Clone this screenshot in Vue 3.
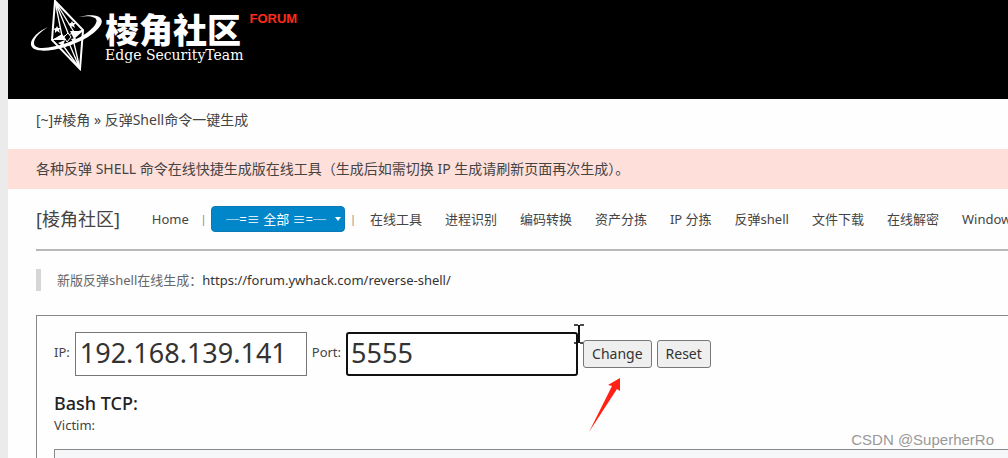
<script setup>
import { ref } from 'vue'

const ip = ref('192.168.139.141')
const port = ref('5555')
const category = ref('all')
const victim = ref('')

const links = ['在线工具', '进程识别', '编码转换', '资产分拣', 'IP 分拣', '反弹shell', '文件下载', '在线解密', 'Windows']

function reset() {
  ip.value = ''
  port.value = ''
}
</script>

<template>
  <div class="page">
    <header class="header">
      <svg class="logo" viewBox="0 0 74 74" aria-hidden="true">
        <g fill="none" stroke="#fff">
          <path d="M24 1 L52 30 L49 69 L21 40 Z" stroke-width="2" />
          <path d="M24 1 L31 36 M24 1 L43 32 M24 1 L37 33 M31 44 L49 69 M38 43 L49 69 M42 39 L49 69" stroke-width="1.3" />
          <path d="M21 40 L52 30" stroke-width="1" />
        </g>
        <path d="M21 40 L31 34 L35 40 Z M39 31 L52 31 L43 39 Z M27 43 L34 40 L32 46 Z M40 39 L45 38 L43 43 Z" fill="#fff" />
        <path d="M33 37 L37 33 L40 37 L36 42 Z" fill="#000" stroke="#fff" />
        <path d="M26 26 l1 2 3 0 -2 2 1 3 -3 -2 -2 2 0 -3 -2 -1 3 -1 Z M41 21 l1 2 3 0 -2 2 1 3 -3 -2 -2 2 0 -3 -2 -1 3 -1 Z" fill="#fff" />
        <path d="M17 27 C4 33 -3 42 1 47 C7 55 37 49 57 37 C71 28 75 19 66 16 C62 15 55 15 48 17 C59 15 68 17 65 23 C61 32 43 42 25 46 C12 49 3 49 3 43 C3 38 9 32 17 27 Z" fill="#fff" />
      </svg>
      <div class="brand">
        <span class="brand-name">棱角社区</span>
        <span class="brand-sub">Edge SecurityTeam</span>
      </div>
      <span class="forum">FORUM</span>
    </header>

    <div class="crumbs">[~]#棱角 » 反弹Shell命令一键生成</div>
    <div class="notice">各种反弹 SHELL 命令在线快捷生成版在线工具（生成后如需切换 IP 生成请刷新页面再次生成）。</div>

    <main class="content">
      <nav class="nav">
        <a class="nav-title" href="#">[棱角社区]</a>
        <a class="home" href="#">Home</a>
        <span class="bar">|</span>
        <div class="picker">
          <select v-model="category" aria-label="分类">
            <option value="all">─=≡ 全部 ≡=─</option>
          </select>
          <svg class="caret" viewBox="0 0 6 4" aria-hidden="true"><path d="M0 0h6L3 4z" fill="#fff" /></svg>
        </div>
        <span class="bar">|</span>
        <div class="links">
          <a v-for="link in links" :key="link" href="#">{{ link }}</a>
        </div>
      </nav>

      <blockquote class="quote">
        新版反弹shell在线生成：<a href="https://forum.ywhack.com/reverse-shell/">https://forum.ywhack.com/reverse-shell/</a>
      </blockquote>

      <section class="card">
        <form class="form" @submit.prevent>
          <label for="ip">IP:</label>
          <input id="ip" v-model="ip" type="text">
          <label for="port">Port:</label>
          <div class="port-box">
            <input id="port" v-model="port" class="active" type="text">
            <svg class="cursor" viewBox="0 0 12 20" aria-hidden="true">
              <path d="M1 1h4M7 1h4M1 19h4M7 19h4" fill="none" stroke="#111" stroke-width="1.4" />
              <path d="M6 1v18" fill="none" stroke="#111" stroke-width="2" />
            </svg>
          </div>
          <div class="change-box">
            <button type="submit">Change</button>
            <svg class="arrow" viewBox="0 0 32 55" aria-hidden="true">
              <path d="M31 0 L19 7 L23 8 L0 54 L28 11 L31 13 Z" fill="#ff2116" />
            </svg>
          </div>
          <button type="button" @click="reset">Reset</button>
        </form>
        <h2>Bash TCP:</h2>
        <label class="victim" for="victim">Victim:</label>
        <textarea id="victim" v-model="victim" rows="4"></textarea>
      </section>
    </main>

    <div class="watermark">CSDN @SuperherRo</div>
  </div>
</template>

<style>
body {
  background: #fefefe;
}
</style>

<style scoped>
.page {
  position: relative;
  box-sizing: border-box;
  height: 100vh;
  overflow: hidden;
  border-left: 8px solid #ebebeb;
  color: #444;
  font-family: "Noto Sans", "Noto Sans CJK SC", sans-serif;
  font-size: 13px;
  line-height: 20px;
  white-space: nowrap;
}

a {
  color: inherit;
  text-decoration: none;
}

.header {
  display: flex;
  align-items: flex-start;
  box-sizing: border-box;
  height: 99px;
  padding-left: 23px;
  background: #000;
  color: #fff;
}

.logo {
  width: 74px;
  height: 74px;
}

.brand {
  display: flex;
  flex-direction: column;
  padding-top: 10px;
}

.brand-name {
  font-family: "Noto Sans CJK SC", sans-serif;
  font-size: 34px;
  font-weight: 900;
  line-height: 38px;
}

.brand-sub {
  font-family: "DejaVu Serif", serif;
  font-size: 14px;
  line-height: 14px;
}

.forum {
  margin-left: 6px;
  padding-top: 9px;
  color: #ff2a1a;
  font-family: "Liberation Sans", sans-serif;
  font-size: 13px;
  font-weight: bold;
}

.crumbs {
  padding: 11px 28px 19px;
  font-size: 14px;
}

.notice {
  padding: 10px 28px;
  background: #ffdfda;
  font-size: 14px;
}

.content {
  padding-left: 28px;
}

.nav {
  display: flex;
  align-items: center;
  height: 60px;
  overflow: hidden;
  border-bottom: 2px solid #b8b8b8;
}

.nav-title {
  margin-right: 32px;
  font-size: 18px;
}

.home {
  margin-right: 12px;
}

.bar {
  color: #777;
  font-size: 10px;
}

.picker {
  position: relative;
  margin: 0 5px;
}

.picker select {
  display: block;
  width: 134px;
  height: 26px;
  padding: 0 14px;
  appearance: none;
  border: 1px solid #0a79b5;
  border-radius: 4px;
  background: #0086c9;
  color: #fff;
  font: inherit;
}

.caret {
  position: absolute;
  top: 11px;
  right: 4px;
  width: 6px;
  height: 4px;
}

.links {
  display: flex;
  gap: 23px;
  margin-left: 14px;
}

.quote {
  margin: 18px 0 24px;
  padding-left: 16px;
  border-left: 5px solid #d6d6d6;
  color: #666;
  line-height: 22px;
}

.quote a {
  color: #333;
}

.card {
  padding: 16px 0 0 17px;
  border: 1px solid #888;
  border-right: 0;
}

.form {
  display: flex;
  align-items: center;
  gap: 5px;
}

.form input {
  display: block;
  box-sizing: border-box;
  width: 232px;
  height: 44px;
  padding: 0 4px 4px;
  border: 1px solid #777;
  outline: none;
  background: #fff;
  color: #333;
  font: 27px "Noto Sans", sans-serif;
}

.form input.active {
  padding: 0 3px 4px;
  border: 2px solid #111;
  border-radius: 3px;
}

.form label {
  padding-bottom: 4px;
}

.form button {
  display: block;
  height: 28px;
  padding: 0 8px 2px;
  border: 1px solid #777;
  border-radius: 3px;
  background: #efefef;
  color: #333;
  font: 14px "Noto Sans", sans-serif;
}

.port-box,
.change-box {
  position: relative;
}

.cursor {
  position: absolute;
  top: -8px;
  right: -7px;
  width: 12px;
  height: 20px;
}

.arrow {
  position: absolute;
  top: 38px;
  left: 6px;
  width: 32px;
  height: 55px;
}

h2 {
  margin: 15px 0 0;
  color: #222;
  font-size: 18px;
  font-weight: 500;
  line-height: 24px;
}

.victim {
  display: block;
}

textarea {
  display: block;
  box-sizing: border-box;
  width: 100%;
  margin-top: 14px;
  border: 1px solid #888;
  border-right: 0;
  background: #f5f7f9;
  resize: none;
}

.watermark {
  position: absolute;
  right: 14px;
  bottom: 8px;
  color: #999;
  font-family: "Liberation Sans", sans-serif;
  font-size: 15px;
}
</style>
